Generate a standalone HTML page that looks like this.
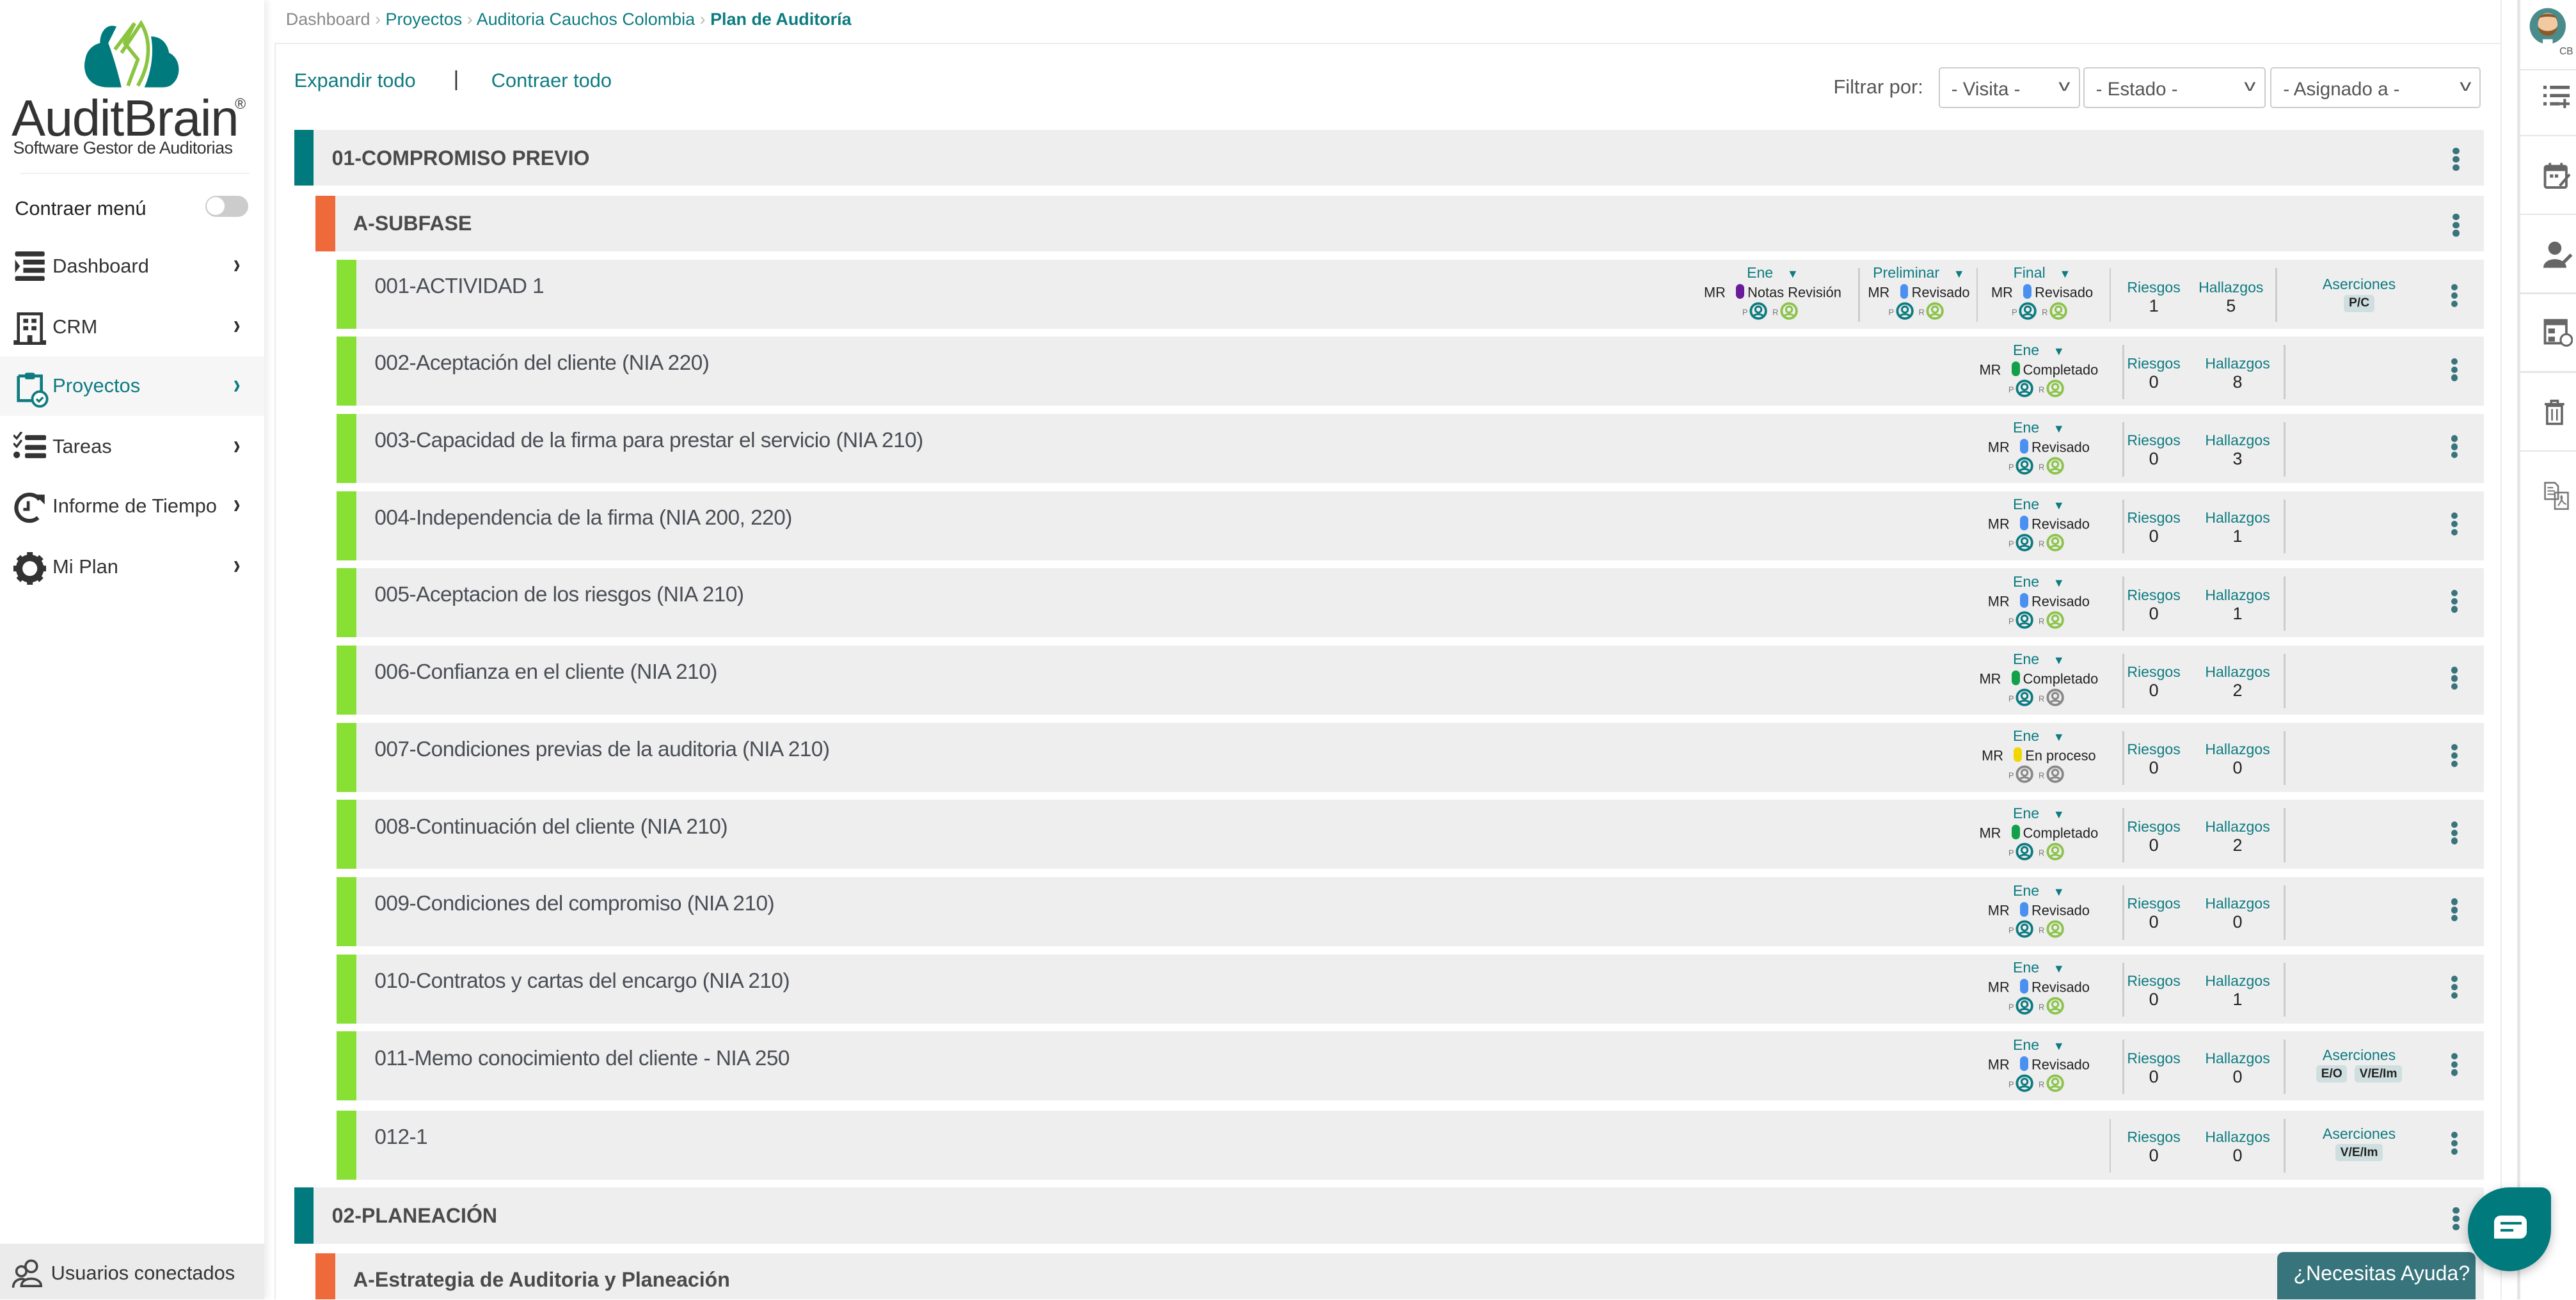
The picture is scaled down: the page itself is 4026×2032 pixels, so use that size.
<!DOCTYPE html>
<html><head><meta charset="utf-8">
<style>
*{margin:0;padding:0;box-sizing:border-box}
html,body{width:4026px;height:2032px;overflow:hidden;background:#fff}
#root{zoom:2.5676;width:1568px;height:791px;position:relative;font-family:"Liberation Sans",sans-serif;color:#333;overflow:hidden}
.abs{position:absolute}
#side{left:0;top:0;width:161px;height:791px;background:#fff;box-shadow:2px 0 4px rgba(0,0,0,.08);z-index:3}
.mi{position:absolute;left:0;width:161px;height:36px;font-size:12px;color:#333}
.mi span{position:absolute;left:32px;top:11px}
.mi svg{position:absolute;left:8px;top:9px}
.mi .ch{position:absolute;left:142px;top:10px;font-size:13px;font-weight:bold;transform:scaleY(1.3)}
#crumb{left:174px;top:6px;font-size:10.5px;color:#888}
#crumb a{color:#0d7b80;text-decoration:none}
.sel{position:absolute;top:41px;height:25px;border:1px solid #ccc;border-radius:2px;font-size:11.5px;color:#555;padding:6px 7px 0;background:#fff}
.sel i{position:absolute;right:6px;top:5px;font-style:normal;font-size:10px;color:#555;transform:scaleX(1.4)}
.ph{position:absolute;background:#eee;height:34px}
.ph .bar{position:absolute;left:0;top:0;bottom:0;width:12px}
.ph .t{position:absolute;left:23px;top:10px;font-size:12.5px;font-weight:bold;color:#4a4a4a}
.act{position:absolute;left:205px;width:1307px;height:42px;background:#eee}
.act .bar{position:absolute;left:0;top:0;bottom:0;width:12px;background:#89e035}
.act .t{position:absolute;left:23px;top:9px;font-size:13px;color:#4a4e55;letter-spacing:-.2px}
.keb{position:absolute;width:4px}
.keb b{display:block;width:4px;height:4px;border-radius:2px;background:#39737b;margin-bottom:1px}
.ene{position:absolute;width:96px;text-align:center;top:3px}
.ene .h{font-size:9px;color:#0d7b80;height:12px}
.ene .h i{font-style:normal;font-size:7px;margin-left:6px}
.ene .s{font-size:8.5px;color:#222;height:11px;white-space:nowrap}
.ene .s b{display:inline-block;width:5px;height:9px;border-radius:3px;vertical-align:-1px;margin:0 2px 0 4px}
.ene .a{font-size:5px;color:#777;height:12px}
.ene .a svg{vertical-align:-3px;margin:0 3px 0 1px}
.sepv{position:absolute;width:1px;background:#ccc;top:5px;height:33px}
.rh{position:absolute;text-align:center;width:54px;font-size:9px;color:#0d7b80;top:11px}
.rh div{color:#222;font-size:10.5px;margin-top:0px}
.as{position:absolute;width:90px;text-align:center;font-size:9px;color:#0d7b80;top:9px}
.as span{display:inline-block;background:#cfdfe0;color:#222;font-weight:bold;font-size:7.5px;padding:1px 3px;border-radius:2px;margin:1px 1px 0}
.pu{background:#6a1b9a}.bl{background:#4a90f0}.gr{background:#13a04a}.ye{background:#f2d600}
#rail{left:1532px;top:0;width:36px;height:791px;border-left:2px solid #e6e6e6;background:#fff}
.rs{position:absolute;left:0;width:36px;height:1px;background:#e6e6e6}
</style></head><body><div id="root">

<div id="side" class="abs">
 <svg class="abs" style="left:48px;top:8px" width="64" height="46" viewBox="0 0 64 46">
  <path d="M18 45 C6 45 2 36 4 28 C5 22 9 19 13 18 C13 10 18 6 23 8 L18 18 C21 26 24 36 26 45Z" fill="#007a7c"/>
  <path d="M40 45 C44 36 46 24 44 14 C50 14 54 18 55 24 C62 27 63 38 57 43 C55 45 52 45 50 45Z" fill="#007a7c"/>
  <path d="M22 22 L34 6 L28 18 L36 28 L30 44" stroke="#8bc540" stroke-width="2.2" fill="none"/>
  <path d="M26 24 L38 6 C44 16 44 30 36 44" stroke="#8bc540" stroke-width="2.2" fill="none"/>
 </svg>
 <div class="abs" style="left:7px;top:55px;font-size:31px;color:#333;letter-spacing:-.5px;line-height:34px">AuditBrain</div>
 <div class="abs" style="left:143px;top:58px;font-size:9px;color:#333">®</div>
 <div class="abs" style="left:8px;top:84px;font-size:10.5px;color:#333;letter-spacing:-.2px">Software Gestor de Auditorias</div>
 <div class="abs" style="left:12px;top:105px;width:140px;height:1px;background:#f0f0f0"></div>
 <div class="abs" style="left:9px;top:120px;font-size:12px;color:#222">Contraer menú</div>
 <div class="abs" style="left:125px;top:119px;width:26px;height:13px;border-radius:7px;background:#ccc;border:1px solid #ccc"><div style="width:11px;height:11px;border-radius:6px;background:#fff"></div></div>

 <div class="mi" style="top:144px"><svg width="20" height="18" viewBox="0 0 20 18"><rect x="1" y="0" width="18" height="3" rx="1" fill="#333"/><rect x="6" y="5" width="13" height="3" fill="#333"/><rect x="6" y="10" width="13" height="3" fill="#333"/><rect x="1" y="15" width="18" height="3" rx="1" fill="#333"/><path d="M1 5 L4 9 L1 13Z" fill="#333"/></svg><span>Dashboard</span><b class="ch">›</b></div>
 <div class="mi" style="top:181px"><svg width="20" height="20" viewBox="0 0 20 20"><path d="M3 1 H17 V18 H19 V19 H1 V18 H3Z" fill="none" stroke="#333" stroke-width="1.8"/><rect x="6" y="4" width="3" height="2.5" fill="#333"/><rect x="11" y="4" width="3" height="2.5" fill="#333"/><rect x="6" y="8.5" width="3" height="2.5" fill="#333"/><rect x="11" y="8.5" width="3" height="2.5" fill="#333"/><rect x="8.5" y="14" width="3" height="5" fill="#333"/></svg><span>CRM</span><b class="ch">›</b></div>
 <div class="mi" style="top:217px;background:#f6f6f6;color:#0d7b80"><svg width="22" height="22" viewBox="0 0 22 22"><path d="M3 3 H17 V13 M3 3 V18 H12" fill="none" stroke="#0d7b80" stroke-width="1.8"/><rect x="7" y="1" width="6" height="4" rx="1" fill="#0d7b80"/><circle cx="16" cy="17" r="4.5" fill="#fff" stroke="#0d7b80" stroke-width="1.5"/><path d="M14 17 L15.5 18.5 L18 16" stroke="#0d7b80" stroke-width="1.3" fill="none"/></svg><span>Proyectos</span><b class="ch" style="color:#0d7b80">›</b></div>
 <div class="mi" style="top:254px"><svg width="20" height="18" viewBox="0 0 20 18"><path d="M0 2 L2 4 L5 0 M0 7 L2 9 L5 5" stroke="#333" stroke-width="1.3" fill="none"/><circle cx="2" cy="14" r="2" fill="#333"/><rect x="7" y="2" width="13" height="3" rx="1" fill="#333"/><rect x="7" y="8" width="13" height="3" rx="1" fill="#333"/><rect x="7" y="13" width="13" height="3" rx="1" fill="#333"/></svg><span>Tareas</span><b class="ch">›</b></div>
 <div class="mi" style="top:290px"><svg width="20" height="20" viewBox="0 0 20 20"><path d="M16 5 A8 8 0 1 0 15 16" fill="none" stroke="#333" stroke-width="2.4"/><path d="M13 2 L19 2 L19 8Z" fill="#333"/><path d="M9 6 V11 H6" stroke="#333" stroke-width="1.8" fill="none"/></svg><span>Informe de Tiempo</span><b class="ch">›</b></div>
 <div class="mi" style="top:327px"><svg width="20" height="20" viewBox="0 0 20 20"><circle cx="10" cy="10" r="6.5" fill="none" stroke="#333" stroke-width="4"/><g stroke="#333" stroke-width="3.5"><path d="M10 0 V4 M10 16 V20 M0 10 H4 M16 10 H20 M3 3 L5.5 5.5 M14.5 14.5 L17 17 M17 3 L14.5 5.5 M5.5 14.5 L3 17"/></g></svg><span>Mi Plan</span><b class="ch">›</b></div>

 <div class="abs" style="left:0;top:757px;width:161px;height:34px;background:#ebebeb"><svg class="abs" style="left:7px;top:8px" width="20" height="20" viewBox="0 0 20 20"><circle cx="12" cy="6" r="3.5" fill="none" stroke="#444" stroke-width="1.4"/><path d="M6 18 C6 12 18 12 18 18Z" fill="none" stroke="#444" stroke-width="1.4"/><circle cx="6" cy="9" r="3" fill="none" stroke="#444" stroke-width="1.4"/><path d="M1 19 C1 14 6 13 8 14" fill="none" stroke="#444" stroke-width="1.4"/></svg><span class="abs" style="left:31px;top:11px;font-size:12px;color:#333">Usuarios conectados</span></div>
</div>

<div id="crumb" class="abs">Dashboard <span style="color:#bbb">›</span> <a>Proyectos</a> <span style="color:#bbb">›</span> <a>Auditoria Cauchos Colombia</a> <span style="color:#bbb">›</span> <b style="font-weight:bold;font-size:10.5px;color:#0d7b80">Plan de Auditoría</b></div>
<div class="abs" style="left:167px;top:26px;width:1355px;height:1px;background:#ececec"></div>
<div class="abs" style="left:167px;top:26px;width:1px;height:765px;background:#ececec"></div>
<div class="abs" style="left:1522px;top:0px;width:1px;height:791px;background:#ececec"></div>

<div class="abs" style="left:179px;top:42px;font-size:12px;color:#0d7b80">Expandir todo</div>
<div class="abs" style="left:276px;top:41px;font-size:13px;color:#333">|</div>
<div class="abs" style="left:299px;top:42px;font-size:12px;color:#0d7b80">Contraer todo</div>

<div class="abs" style="left:1116px;top:46px;font-size:12px;color:#555">Filtrar por:</div>
<div class="sel" style="left:1180px;width:86px">- Visita -<i>v</i></div>
<div class="sel" style="left:1268px;width:111px">- Estado -<i>v</i></div>
<div class="sel" style="left:1382px;width:128px">- Asignado a -<i>v</i></div>

<div class="ph" style="left:179px;top:79px;width:1333px"><div class="bar" style="background:#007a7c"></div><span class="t">01-COMPROMISO PREVIO</span><div class="keb" style="left:1314px;top:11px"><b></b><b></b><b></b></div></div>
<div class="ph" style="left:192px;top:119px;width:1320px"><div class="bar" style="background:#ee6a3a"></div><span class="t">A-SUBFASE</span><div class="keb" style="left:1301px;top:11px"><b></b><b></b><b></b></div></div>

<svg width="0" height="0" style="position:absolute"><defs>
<symbol id="uT" viewBox="0 0 12 12"><circle cx="6" cy="6" r="5" fill="none" stroke="#0d7b80" stroke-width="1.6"/><circle cx="6" cy="5" r="2" fill="none" stroke="#0d7b80" stroke-width="1.3"/><path d="M2.5 10 C3 7.5 9 7.5 9.5 10" fill="none" stroke="#0d7b80" stroke-width="1.3"/></symbol>
<symbol id="uG" viewBox="0 0 12 12"><circle cx="6" cy="6" r="5" fill="none" stroke="#8bc34a" stroke-width="1.6"/><circle cx="6" cy="5" r="2" fill="none" stroke="#8bc34a" stroke-width="1.3"/><path d="M2.5 10 C3 7.5 9 7.5 9.5 10" fill="none" stroke="#8bc34a" stroke-width="1.3"/></symbol>
<symbol id="uX" viewBox="0 0 12 12"><circle cx="6" cy="6" r="5" fill="none" stroke="#888" stroke-width="1.6"/><circle cx="6" cy="5" r="2" fill="none" stroke="#888" stroke-width="1.3"/><path d="M2.5 10 C3 7.5 9 7.5 9.5 10" fill="none" stroke="#888" stroke-width="1.3"/></symbol>
</defs></svg>

<div class="act" style="top:158px"><div class="bar"></div><span class="t">001-ACTIVIDAD 1</span>
 <div class="ene" style="left:826px"><div class="h">Ene <i>▼</i></div><div class="s">MR <b class="pu"></b>Notas Revisión</div><div class="a">P<svg width="11" height="11"><use href="#uT"/></svg>R<svg width="11" height="11"><use href="#uG"/></svg></div></div>
 <div class="sepv" style="left:926px"></div>
 <div class="ene" style="left:915px"><div class="h">Preliminar <i>▼</i></div><div class="s">MR <b class="bl"></b>Revisado</div><div class="a">P<svg width="11" height="11"><use href="#uT"/></svg>R<svg width="11" height="11"><use href="#uG"/></svg></div></div>
 <div class="sepv" style="left:998px"></div>
 <div class="ene" style="left:990px"><div class="h">Final <i>▼</i></div><div class="s">MR <b class="bl"></b>Revisado</div><div class="a">P<svg width="11" height="11"><use href="#uT"/></svg>R<svg width="11" height="11"><use href="#uG"/></svg></div></div>
 <div class="sepv" style="left:1079px"></div>
 <div class="rh" style="left:1079px;top:12px">Riesgos<div>1</div></div>
 <div class="rh" style="left:1126px;top:12px">Hallazgos<div>5</div></div>
 <div class="sepv" style="left:1180px"></div>
 <div class="as" style="left:1186px;top:10px">Aserciones<br><span>P/C</span></div>
 <div class="keb" style="left:1287px;top:15px"><b></b><b></b><b></b></div>
</div>

<div class="act" style="top:205px"><div class="bar"></div><span class="t">002-Aceptación del cliente (NIA 220)</span>
 <div class="ene" style="left:988px"><div class="h">Ene <i>▼</i></div><div class="s">MR <b class="gr"></b>Completado</div><div class="a">P<svg width="11" height="11"><use href="#uT"/></svg>R<svg width="11" height="11"><use href="#uG"/></svg></div></div>
 <div class="sepv" style="left:1087px"></div><div class="rh" style="left:1079px">Riesgos<div>0</div></div><div class="rh" style="left:1130px">Hallazgos<div>8</div></div><div class="sepv" style="left:1185px"></div>
 <div class="keb" style="left:1287px;top:13px"><b></b><b></b><b></b></div></div>

<div class="act" style="top:252px"><div class="bar"></div><span class="t">003-Capacidad de la firma para prestar el servicio (NIA 210)</span>
 <div class="ene" style="left:988px"><div class="h">Ene <i>▼</i></div><div class="s">MR <b class="bl"></b>Revisado</div><div class="a">P<svg width="11" height="11"><use href="#uT"/></svg>R<svg width="11" height="11"><use href="#uG"/></svg></div></div>
 <div class="sepv" style="left:1087px"></div><div class="rh" style="left:1079px">Riesgos<div>0</div></div><div class="rh" style="left:1130px">Hallazgos<div>3</div></div><div class="sepv" style="left:1185px"></div>
 <div class="keb" style="left:1287px;top:13px"><b></b><b></b><b></b></div></div>

<div class="act" style="top:299px"><div class="bar"></div><span class="t">004-Independencia de la firma (NIA 200, 220)</span>
 <div class="ene" style="left:988px"><div class="h">Ene <i>▼</i></div><div class="s">MR <b class="bl"></b>Revisado</div><div class="a">P<svg width="11" height="11"><use href="#uT"/></svg>R<svg width="11" height="11"><use href="#uG"/></svg></div></div>
 <div class="sepv" style="left:1087px"></div><div class="rh" style="left:1079px">Riesgos<div>0</div></div><div class="rh" style="left:1130px">Hallazgos<div>1</div></div><div class="sepv" style="left:1185px"></div>
 <div class="keb" style="left:1287px;top:13px"><b></b><b></b><b></b></div></div>

<div class="act" style="top:346px"><div class="bar"></div><span class="t">005-Aceptacion de los riesgos (NIA 210)</span>
 <div class="ene" style="left:988px"><div class="h">Ene <i>▼</i></div><div class="s">MR <b class="bl"></b>Revisado</div><div class="a">P<svg width="11" height="11"><use href="#uT"/></svg>R<svg width="11" height="11"><use href="#uG"/></svg></div></div>
 <div class="sepv" style="left:1087px"></div><div class="rh" style="left:1079px">Riesgos<div>0</div></div><div class="rh" style="left:1130px">Hallazgos<div>1</div></div><div class="sepv" style="left:1185px"></div>
 <div class="keb" style="left:1287px;top:13px"><b></b><b></b><b></b></div></div>

<div class="act" style="top:393px"><div class="bar"></div><span class="t">006-Confianza en el cliente (NIA 210)</span>
 <div class="ene" style="left:988px"><div class="h">Ene <i>▼</i></div><div class="s">MR <b class="gr"></b>Completado</div><div class="a">P<svg width="11" height="11"><use href="#uT"/></svg>R<svg width="11" height="11"><use href="#uX"/></svg></div></div>
 <div class="sepv" style="left:1087px"></div><div class="rh" style="left:1079px">Riesgos<div>0</div></div><div class="rh" style="left:1130px">Hallazgos<div>2</div></div><div class="sepv" style="left:1185px"></div>
 <div class="keb" style="left:1287px;top:13px"><b></b><b></b><b></b></div></div>

<div class="act" style="top:440px"><div class="bar"></div><span class="t">007-Condiciones previas de la auditoria (NIA 210)</span>
 <div class="ene" style="left:988px"><div class="h">Ene <i>▼</i></div><div class="s">MR <b class="ye"></b>En proceso</div><div class="a">P<svg width="11" height="11"><use href="#uX"/></svg>R<svg width="11" height="11"><use href="#uX"/></svg></div></div>
 <div class="sepv" style="left:1087px"></div><div class="rh" style="left:1079px">Riesgos<div>0</div></div><div class="rh" style="left:1130px">Hallazgos<div>0</div></div><div class="sepv" style="left:1185px"></div>
 <div class="keb" style="left:1287px;top:13px"><b></b><b></b><b></b></div></div>

<div class="act" style="top:487px"><div class="bar"></div><span class="t">008-Continuación del cliente (NIA 210)</span>
 <div class="ene" style="left:988px"><div class="h">Ene <i>▼</i></div><div class="s">MR <b class="gr"></b>Completado</div><div class="a">P<svg width="11" height="11"><use href="#uT"/></svg>R<svg width="11" height="11"><use href="#uG"/></svg></div></div>
 <div class="sepv" style="left:1087px"></div><div class="rh" style="left:1079px">Riesgos<div>0</div></div><div class="rh" style="left:1130px">Hallazgos<div>2</div></div><div class="sepv" style="left:1185px"></div>
 <div class="keb" style="left:1287px;top:13px"><b></b><b></b><b></b></div></div>

<div class="act" style="top:534px"><div class="bar"></div><span class="t">009-Condiciones del compromiso (NIA 210)</span>
 <div class="ene" style="left:988px"><div class="h">Ene <i>▼</i></div><div class="s">MR <b class="bl"></b>Revisado</div><div class="a">P<svg width="11" height="11"><use href="#uT"/></svg>R<svg width="11" height="11"><use href="#uG"/></svg></div></div>
 <div class="sepv" style="left:1087px"></div><div class="rh" style="left:1079px">Riesgos<div>0</div></div><div class="rh" style="left:1130px">Hallazgos<div>0</div></div><div class="sepv" style="left:1185px"></div>
 <div class="keb" style="left:1287px;top:13px"><b></b><b></b><b></b></div></div>

<div class="act" style="top:581px"><div class="bar"></div><span class="t">010-Contratos y cartas del encargo (NIA 210)</span>
 <div class="ene" style="left:988px"><div class="h">Ene <i>▼</i></div><div class="s">MR <b class="bl"></b>Revisado</div><div class="a">P<svg width="11" height="11"><use href="#uT"/></svg>R<svg width="11" height="11"><use href="#uG"/></svg></div></div>
 <div class="sepv" style="left:1087px"></div><div class="rh" style="left:1079px">Riesgos<div>0</div></div><div class="rh" style="left:1130px">Hallazgos<div>1</div></div><div class="sepv" style="left:1185px"></div>
 <div class="keb" style="left:1287px;top:13px"><b></b><b></b><b></b></div></div>

<div class="act" style="top:628px"><div class="bar"></div><span class="t">011-Memo conocimiento del cliente - NIA 250</span>
 <div class="ene" style="left:988px"><div class="h">Ene <i>▼</i></div><div class="s">MR <b class="bl"></b>Revisado</div><div class="a">P<svg width="11" height="11"><use href="#uT"/></svg>R<svg width="11" height="11"><use href="#uG"/></svg></div></div>
 <div class="sepv" style="left:1087px"></div><div class="rh" style="left:1079px">Riesgos<div>0</div></div><div class="rh" style="left:1130px">Hallazgos<div>0</div></div><div class="sepv" style="left:1185px"></div>
 <div class="as" style="left:1186px">Aserciones<br><span>E/O</span> <span>V/E/Im</span></div>
 <div class="keb" style="left:1287px;top:13px"><b></b><b></b><b></b></div></div>

<div class="act" style="top:676px"><div class="bar"></div><span class="t">012-1</span>
 <div class="sepv" style="left:1079px"></div><div class="rh" style="left:1079px">Riesgos<div>0</div></div><div class="rh" style="left:1130px">Hallazgos<div>0</div></div><div class="sepv" style="left:1185px"></div>
 <div class="as" style="left:1186px">Aserciones<br><span>V/E/Im</span></div>
 <div class="keb" style="left:1287px;top:13px"><b></b><b></b><b></b></div></div>

<div class="ph" style="left:179px;top:723px;width:1333px"><div class="bar" style="background:#007a7c"></div><span class="t">02-PLANEACIÓN</span><div class="keb" style="left:1314px;top:12px"><b></b><b></b><b></b></div></div>
<div class="ph" style="left:192px;top:763px;width:1320px"><div class="bar" style="background:#ee6a3a"></div><span class="t" style="top:9px">A-Estrategia de Auditoria y Planeación</span></div>

<div id="rail" class="abs">
 <svg class="abs" style="left:5px;top:4px" width="24" height="24" viewBox="0 0 24 24"><circle cx="12" cy="12" r="11" fill="#4a8c8c"/><ellipse cx="12" cy="11" rx="6" ry="7" fill="#f2c9a0"/><path d="M6 9 C6 3 18 3 18 9 L17 7 C14 6 10 6 7 7Z" fill="#8a5a2b"/><path d="M6 12 C7 20 17 20 18 12 C16 16 8 16 6 12Z" fill="#8a5a2b"/><rect x="9" y="20" width="6" height="3" fill="#fff"/></svg>
 <div class="abs" style="left:24px;top:28px;font-size:6px;color:#555">CB</div>
 <div class="rs" style="top:42px"></div>
 <svg class="abs" style="left:14px;top:52px" width="17" height="14" viewBox="0 0 17 14"><rect x="0" y="0" width="2" height="2" fill="#666"/><rect x="4" y="0" width="12" height="2" fill="#666"/><rect x="0" y="5" width="2" height="2" fill="#666"/><rect x="4" y="5" width="12" height="2" fill="#666"/><rect x="0" y="10" width="2" height="2" fill="#666"/><rect x="4" y="10" width="6" height="2" fill="#666"/><path d="M13 8 V14 M10 11 H16" stroke="#666" stroke-width="1.6"/></svg>
 <div class="rs" style="top:82px"></div>
 <svg class="abs" style="left:14px;top:98px" width="17" height="17" viewBox="0 0 17 17"><rect x="1" y="3" width="13" height="13" rx="1" fill="none" stroke="#666" stroke-width="1.5"/><rect x="1" y="3" width="13" height="3" fill="#666"/><path d="M4 1 V4 M11 1 V4" stroke="#666" stroke-width="1.5"/><rect x="4" y="8" width="2" height="2" fill="#666"/><rect x="7" y="8" width="2" height="2" fill="#666"/><path d="M10 15 L16 8" stroke="#666" stroke-width="1.6"/></svg>
 <div class="rs" style="top:130px"></div>
 <svg class="abs" style="left:14px;top:146px" width="18" height="17" viewBox="0 0 18 17"><circle cx="7" cy="5" r="4" fill="#666"/><path d="M0 17 C0 10 14 10 14 17Z" fill="#666"/><path d="M11 15 L17 9" stroke="#666" stroke-width="2"/></svg>
 <div class="rs" style="top:178px"></div>
 <svg class="abs" style="left:14px;top:194px" width="18" height="17" viewBox="0 0 18 17"><rect x="1" y="1" width="13" height="14" fill="none" stroke="#666" stroke-width="1.5"/><rect x="1" y="1" width="13" height="3" fill="#666"/><rect x="3" y="6" width="4" height="3" fill="#666"/><rect x="3" y="11" width="4" height="3" fill="#666"/><circle cx="14" cy="13" r="3.5" fill="#fff" stroke="#666" stroke-width="1.2"/></svg>
 <div class="rs" style="top:226px"></div>
 <svg class="abs" style="left:15px;top:243px" width="12" height="16" viewBox="0 0 12 16"><path d="M0 3 H12 M4 3 V1 H8 V3" stroke="#666" stroke-width="1.4" fill="none"/><rect x="1.5" y="4" width="9" height="11" fill="none" stroke="#666" stroke-width="1.4"/><path d="M4.5 6 V13 M7.5 6 V13" stroke="#666" stroke-width="1"/></svg>
 <div class="rs" style="top:274px"></div>
 <svg class="abs" style="left:14px;top:293px" width="16" height="18" viewBox="0 0 16 18"><path d="M1 1 H7 L9 3 V11 H1Z" fill="none" stroke="#777" stroke-width="1"/><path d="M2.5 4 H6 M2.5 6 H7 M2.5 8 H7" stroke="#777" stroke-width=".8"/><rect x="7" y="7" width="8" height="10" fill="none" stroke="#777" stroke-width="1"/><path d="M9 15 C11 12 12 10 11 9 C10 10 12 14 14 14" stroke="#777" stroke-width=".8" fill="none"/></svg>
</div>

<div class="abs" style="left:1386px;top:762px;width:121px;height:29px;background:#37747c;border-radius:4px 4px 0 0;color:#fff;font-size:12.5px;padding:6px 0 0 10px;z-index:5">¿Necesitas Ayuda?</div>
<div class="abs" style="left:1502px;top:723px;width:51px;height:51px;background:#007a7c;border-radius:26px 6px 26px 26px;box-shadow:0 2px 6px rgba(0,0,0,.25);z-index:6">
 <div class="abs" style="left:16px;top:17px;width:20px;height:14px;background:#fff;border-radius:4px 4px 4px 0"><div class="abs" style="left:4px;top:4px;width:13px;height:1.6px;background:#007a7c"></div><div class="abs" style="left:4px;top:8px;width:8px;height:1.6px;background:#007a7c"></div></div>
</div>

</div></body></html>
